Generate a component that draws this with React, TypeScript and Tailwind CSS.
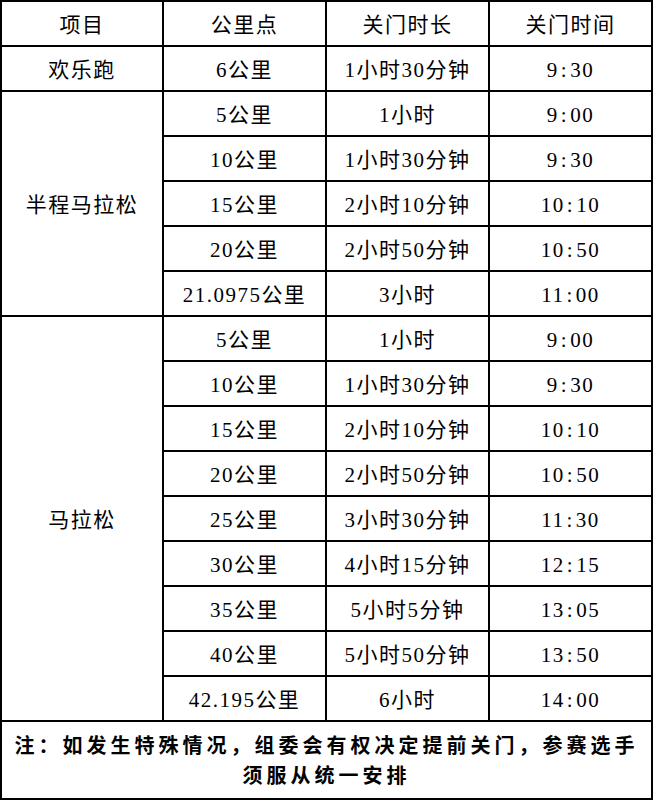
import React from "react";

const half: [string, string, string][] = [
  ["5公里", "1小时", "9:00"],
  ["10公里", "1小时30分钟", "9:30"],
  ["15公里", "2小时10分钟", "10:10"],
  ["20公里", "2小时50分钟", "10:50"],
  ["21.0975公里", "3小时", "11:00"],
];

const full: [string, string, string][] = [
  ["5公里", "1小时", "9:00"],
  ["10公里", "1小时30分钟", "9:30"],
  ["15公里", "2小时10分钟", "10:10"],
  ["20公里", "2小时50分钟", "10:50"],
  ["25公里", "3小时30分钟", "11:30"],
  ["30公里", "4小时15分钟", "12:15"],
  ["35公里", "5小时5分钟", "13:05"],
  ["40公里", "5小时50分钟", "13:50"],
  ["42.195公里", "6小时", "14:00"],
];

function Cell({ children, className = "" }: { children: React.ReactNode; className?: string }) {
  return (
    <div className={`bg-white flex items-center justify-center pt-[3px] text-black text-[21px] tracking-[1.5px] leading-none ${className}`}>
      {children}
    </div>
  );
}

function Time({ t }: { t: string }) {
  const [a, b] = t.split(":");
  return (
    <span>
      {a}
      <span className="px-[2px]">:</span>
      {b}
    </span>
  );
}

export default function App() {
  return (
    <div
      className="w-[653px] h-[801px] bg-white"
      style={{ fontFamily: '"Liberation Serif", "Noto Sans CJK SC", serif' }}
    >
      <div className="grid w-[653px] grid-cols-[160px_161px_161px_161px] grid-rows-[repeat(16,43px)_76px] gap-[2px] bg-black p-[2px]">
        <Cell>项目</Cell>
        <Cell>公里点</Cell>
        <Cell>关门时长</Cell>
        <Cell>关门时间</Cell>

        <Cell>欢乐跑</Cell>
        <Cell>6公里</Cell>
        <Cell>1小时30分钟</Cell>
        <Cell><Time t="9:30" /></Cell>

        <Cell className="row-span-5">半程马拉松</Cell>
        {half.map((r, i) => (
          <React.Fragment key={"h" + i}>
            <Cell>{r[0]}</Cell>
            <Cell>{r[1]}</Cell>
            <Cell><Time t={r[2]} /></Cell>
          </React.Fragment>
        ))}

        <Cell className="row-span-9">马拉松</Cell>
        {full.map((r, i) => (
          <React.Fragment key={"f" + i}>
            <Cell>{r[0]}</Cell>
            <Cell>{r[1]}</Cell>
            <Cell><Time t={r[2]} /></Cell>
          </React.Fragment>
        ))}

        <div className="col-span-4 bg-white flex flex-col items-center justify-center pt-[2px] text-black font-bold text-[20px] leading-[30px] tracking-[4px]">
          <span>注：如发生特殊情况，组委会有权决定提前关门，参赛选手</span>
          <span>须服从统一安排</span>
        </div>
      </div>
    </div>
  );
}
